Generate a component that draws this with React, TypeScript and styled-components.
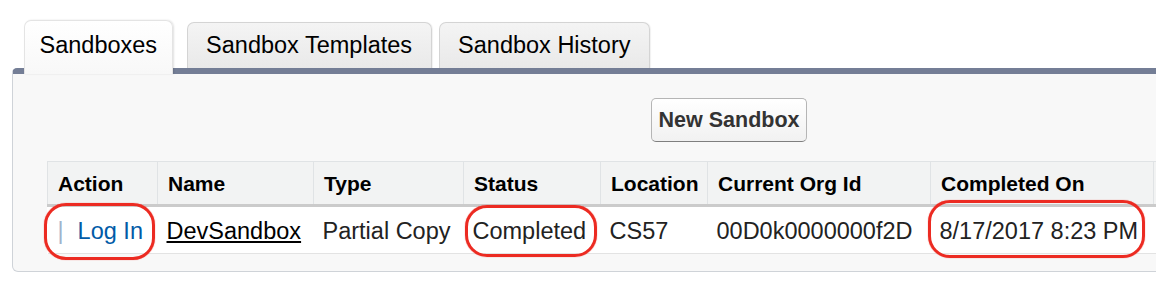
import React from 'react';
import styled, { createGlobalStyle } from 'styled-components';

const GlobalStyle = createGlobalStyle`
  html, body {
    margin: 0;
    padding: 0;
    background: #ffffff;
    overflow: hidden;
  }
  body {
    font-family: "Liberation Sans", Arial, sans-serif;
  }
`;

type Column = { key: string; title: string; width: number };

const columns: Column[] = [
  { key: 'action', title: 'Action', width: 110 },
  { key: 'name', title: 'Name', width: 156 },
  { key: 'type', title: 'Type', width: 150 },
  { key: 'status', title: 'Status', width: 137 },
  { key: 'location', title: 'Location', width: 107 },
  { key: 'org', title: 'Current Org Id', width: 223 },
  { key: 'completed', title: 'Completed On', width: 223 },
  { key: 'more', title: '', width: 258 },
];

const tabs = ['Sandboxes', 'Sandbox Templates', 'Sandbox History'];

const App: React.FC = () => {
  return (
    <>
      <GlobalStyle />
      <Page>
        <TabStrip>
          {tabs.map((t, i) => (
            <Tab key={t} $active={i === 0}>
              {t}
            </Tab>
          ))}
        </TabStrip>
        <Panel>
          <ButtonRow>
            <Button>New Sandbox</Button>
          </ButtonRow>
          <Table>
            <colgroup>
              {columns.map((c) => (
                <col key={c.key} style={{ width: c.width }} />
              ))}
            </colgroup>
            <thead>
              <tr>
                {columns.map((c) => (
                  <HeadCell key={c.key}>{c.title}</HeadCell>
                ))}
              </tr>
            </thead>
            <tbody>
              <tr>
                <Cell>
                  <Marked $l={13} $r={12} $t={15} $b={15}>
                    <Pipe>|</Pipe>
                    <ActionLink href="#">Log In</ActionLink>
                  </Marked>
                </Cell>
                <Cell>
                  <NameLink href="#">DevSandbox</NameLink>
                </Cell>
                <Cell>Partial Copy</Cell>
                <Cell>
                  <Marked $l={8} $r={11} $t={13} $b={12}>
                    Completed
                  </Marked>
                </Cell>
                <Cell>CS57</Cell>
                <Cell>00D0k0000000f2D</Cell>
                <Cell>
                  <Marked $l={12} $r={7} $t={18} $b={13}>
                    8/17/2017 8:23 PM
                  </Marked>
                </Cell>
                <Cell />
              </tr>
            </tbody>
          </Table>
        </Panel>
      </Page>
    </>
  );
};

const Page = styled.div`
  padding: 20px 0 0 12px;
  width: 1600px;
`;

const TabStrip = styled.div`
  display: flex;
  align-items: flex-end;
  gap: 7px;
  padding-left: 12px;
`;

const Tab = styled.div<{ $active?: boolean }>`
  position: relative;
  z-index: ${(p) => (p.$active ? 2 : 0)};
  height: ${(p) => (p.$active ? 54 : 46)}px;
  margin-bottom: ${(p) => (p.$active ? -6 : 0)}px;
  margin-right: ${(p) => (p.$active ? 7 : 0)}px;
  box-sizing: border-box;
  padding: ${(p) => (p.$active ? '11px 14.5px 0' : '9px 18.5px 0')};
  font-size: 23.5px;
  line-height: 26px;
  color: #000;
  white-space: nowrap;
  border: 1px solid ${(p) => (p.$active ? '#e4e4e4' : '#d4d4d4')};
  border-bottom: none;
  border-radius: 7px 7px 0 0;
  background: ${(p) =>
    p.$active
      ? 'linear-gradient(#ffffff, #f8f8f8)'
      : 'linear-gradient(#f4f4f4, #e9e9e9)'};
  box-shadow: ${(p) =>
    p.$active ? '1px 0 2px rgba(0,0,0,0.12)' : '1px 0 1px rgba(0,0,0,0.06)'};
`;

const Panel = styled.div`
  width: 1434px;
  box-sizing: border-box;
  background: #f8f8f8;
  border: 1px solid #cfd3d8;
  border-top: 6px solid #747e96;
  border-radius: 5px 5px 6px 6px;
  padding: 24px 34px 17px;
`;

const ButtonRow = styled.div`
  display: flex;
  justify-content: center;
  margin-bottom: 19px;
`;

const Button = styled.button`
  height: 44px;
  box-sizing: border-box;
  padding: 0 7px;
  font-family: "Liberation Sans", Arial, sans-serif;
  font-weight: bold;
  font-size: 21.5px;
  color: #333;
  background: linear-gradient(#ffffff, #f1f1f1);
  border: 1px solid #b5b5b5;
  border-bottom-color: #7f7f7f;
  border-radius: 5px;
  cursor: pointer;
`;

const Table = styled.table`
  width: 1364px;
  table-layout: fixed;
  border-collapse: collapse;
  background: #ffffff;
  border-top: 1px solid #e0e3e5;
`;

const HeadCell = styled.th`
  text-align: left;
  font-weight: bold;
  font-size: 21px;
  line-height: 24px;
  color: #000;
  background: #f2f3f3;
  padding: 10px 10px 8px;
  border-left: 1px solid #e0e3e5;
  border-bottom: 3px solid #cbcbcb;
  white-space: nowrap;
`;

const Cell = styled.td`
  font-size: 23.5px;
  line-height: 27px;
  color: #222;
  padding: 11px 9px 8px;
  border-bottom: 1px solid #e3e3e3;
  white-space: nowrap;
`;

const Marked = styled.span<{ $l: number; $r: number; $t: number; $b: number }>`
  position: relative;
  display: inline-block;
  &::after {
    content: '';
    position: absolute;
    left: -${(p) => p.$l}px;
    right: -${(p) => p.$r}px;
    top: -${(p) => p.$t}px;
    bottom: -${(p) => p.$b}px;
    border: 3px solid #ec2b22;
    border-radius: 22px;
    box-shadow: 0 0 1px rgba(236, 43, 34, 0.8);
    pointer-events: none;
  }
`;

const Pipe = styled.span`
  display: inline-block;
  color: #9fb3cc;
  margin: 0 14px 0 1px;
`;

const ActionLink = styled.a`
  color: #015ba7;
  text-decoration: none;
`;

const NameLink = styled.a`
  color: #000;
  text-decoration: underline;
`;

export default App;
